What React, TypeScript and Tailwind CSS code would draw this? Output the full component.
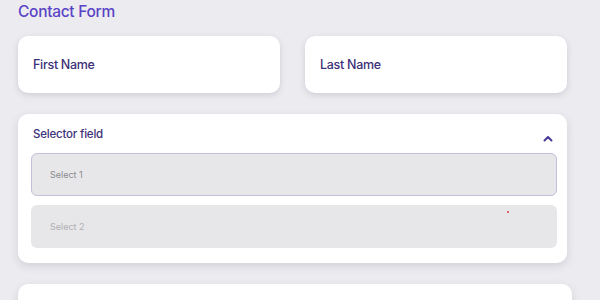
import React from 'react';

function NameCard({ label }: { label: string }) {
  return (
    <div className="flex h-[57px] items-center rounded-[10px] bg-white px-[15px] pt-[2px] shadow-[0_2px_6px_rgba(60,60,90,0.18)]">
      <span className="text-[12.5px] font-medium tracking-[-0.3px] text-[#3d3178]">{label}</span>
    </div>
  );
}

export default function App() {
  return (
    <div
      className="h-[300px] w-[600px] overflow-hidden bg-[#ececf0] pl-[18px] pr-[33px] pt-[2px]"
      style={{ fontFamily: 'Inter, "Noto Sans", sans-serif' }}
    >
      <h1 className="text-[15.5px] font-medium leading-[20px] tracking-[-0.3px] text-[#5a43c6]">Contact Form</h1>

      <div className="mt-[14px] grid grid-cols-2 gap-[25px]">
        <NameCard label="First Name" />
        <NameCard label="Last Name" />
      </div>

      <div className="mt-[21px] rounded-[10px] bg-white pl-[13px] pr-[10px] pb-[15px] pt-[12px] shadow-[0_3px_8px_rgba(60,60,90,0.16)]">
        <div className="flex h-[18px] items-center justify-between pl-[2px] pr-[4px]">
          <span className="text-[11.5px] font-medium tracking-[-0.2px] text-[#3d3178]">Selector field</span>
          <svg width="10" height="7" viewBox="0 0 10 7" className="mt-[6px]">
            <path d="M1.5 5.5 L5 2 L8.5 5.5" fill="none" stroke="#4a3a96" strokeWidth="2" strokeLinecap="round" strokeLinejoin="round" />
          </svg>
        </div>

        <div className="mt-[9px] flex flex-col gap-[9px]">
          <div className="flex h-[43px] items-center rounded-[6px] border border-[#c4bfdc] bg-[#e7e7e9] px-[18px] pt-[1px]">
            <span className="text-[9px] text-[#8a8a8e]">Select 1</span>
          </div>
          <div className="relative flex h-[43px] items-center rounded-[6px] bg-[#e7e7e9] px-[19px]">
            <span className="text-[9px] text-[#b0b0b4]">Select 2</span>
            <span className="absolute left-[476px] top-[6px] h-[2px] w-[2px] rounded-full bg-[#d04040]" />
          </div>
        </div>
      </div>

      <div className="mt-[21px] mr-[-5px] h-[40px] rounded-[10px] bg-white shadow-[0_3px_8px_rgba(60,60,90,0.16)]" />
    </div>
  );
}
